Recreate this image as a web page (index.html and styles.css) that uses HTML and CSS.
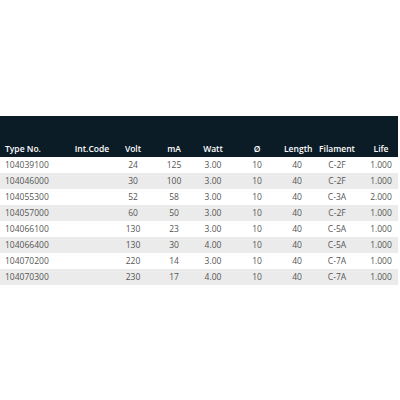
FILE: index.html
```html
<!DOCTYPE html>
<html>
<head>
<meta charset="utf-8">
<link rel="stylesheet" href="styles.css">
</head>
<body>
<div class="page">
<table class="specs">
<colgroup>
<col class="c1"><col class="c2"><col class="c3"><col class="c4"><col class="c5"><col class="c6"><col class="c7"><col class="c8"><col class="c9">
</colgroup>
<thead>
<tr><th class="left">Type No.</th><th>Int.Code</th><th>Volt</th><th>mA</th><th>Watt</th><th>Ø</th><th>Length</th><th>Filament</th><th>Life</th></tr>
</thead>
<tbody>
<tr><td class="left">104039100</td><td></td><td>24</td><td>125</td><td>3.00</td><td>10</td><td>40</td><td>C-2F</td><td>1.000</td></tr>
<tr><td class="left">104046000</td><td></td><td>30</td><td>100</td><td>3.00</td><td>10</td><td>40</td><td>C-2F</td><td>1.000</td></tr>
<tr><td class="left">104055300</td><td></td><td>52</td><td>58</td><td>3.00</td><td>10</td><td>40</td><td>C-3A</td><td>2.000</td></tr>
<tr><td class="left">104057000</td><td></td><td>60</td><td>50</td><td>3.00</td><td>10</td><td>40</td><td>C-2F</td><td>1.000</td></tr>
<tr><td class="left">104066100</td><td></td><td>130</td><td>23</td><td>3.00</td><td>10</td><td>40</td><td>C-5A</td><td>1.000</td></tr>
<tr><td class="left">104066400</td><td></td><td>130</td><td>30</td><td>4.00</td><td>10</td><td>40</td><td>C-5A</td><td>1.000</td></tr>
<tr><td class="left">104070200</td><td></td><td>220</td><td>14</td><td>3.00</td><td>10</td><td>40</td><td>C-7A</td><td>1.000</td></tr>
<tr><td class="left">104070300</td><td></td><td>230</td><td>17</td><td>4.00</td><td>10</td><td>40</td><td>C-7A</td><td>1.000</td></tr>
</tbody>
</table>
</div>
</body>
</html>
```
FILE: styles.css
```css
html, body {
  margin: 0;
  padding: 0;
  background: #ffffff;
}
.page {
  padding-top: 116px;
  width: 398px;
}
.specs {
  width: 398px;
  border-collapse: collapse;
  table-layout: fixed;
  font-family: "Open Sans", "DejaVu Sans", sans-serif;
  font-size: 8.5px;
  color: #555555;
}
.c1 { width: 70px; }
.c2 { width: 44px; }
.c3 { width: 38px; }
.c4 { width: 44px; }
.c5 { width: 34px; }
.c6 { width: 54px; }
.c7 { width: 26px; }
.c8 { width: 54px; }
.c9 { width: 34px; }
.specs th, .specs td {
  padding: 0;
  text-align: center;
  white-space: nowrap;
  overflow: visible;
}
.specs .left {
  text-align: left;
  padding-left: 5px;
}
.specs thead tr {
  background: #0c1c27;
  height: 41px;
}
.specs th {
  color: #ffffff;
  font-weight: 600;
  vertical-align: bottom;
  padding-bottom: 1px;
  line-height: 14px;
}
.specs tbody tr {
  height: 16px;
}
.specs td {
  line-height: 16px;
}
.specs tbody tr:nth-child(even) {
  background: #ebebeb;
}
```
